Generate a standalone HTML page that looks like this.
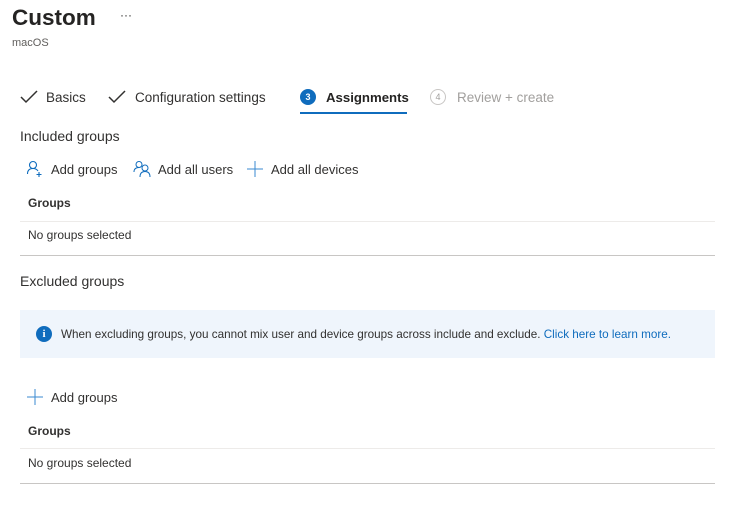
<!DOCTYPE html>
<html><head><meta charset="utf-8"><style>
*{margin:0;padding:0;box-sizing:border-box}
body{width:736px;height:508px;background:#fff;font-family:"Liberation Sans",sans-serif;color:#323130;position:relative;overflow:hidden}
.a{position:absolute;white-space:nowrap}
.t13{font-size:13px}
.line{position:absolute;left:20px;width:695px;height:1px}
svg{position:absolute}
</style></head><body>
<div class="a" style="left:12px;top:5px;font-size:22.5px;font-weight:bold;color:#252423">Custom</div>
<div class="a" style="left:120px;top:8px;font-size:12px">···</div>
<div class="a" style="left:12px;top:37px;font-size:11px;color:#605e5c">macOS</div>

<svg style="left:19px;top:89px" width="20" height="16" viewBox="0 0 20 16"><path d="M2 8l5 5L18 2" fill="none" stroke="#323130" stroke-width="1.5"/></svg>
<div class="a" style="left:46px;top:90px;font-size:13.5px">Basics</div>
<svg style="left:107px;top:89px" width="20" height="16" viewBox="0 0 20 16"><path d="M2 8l5 5L18 2" fill="none" stroke="#323130" stroke-width="1.5"/></svg>
<div class="a" style="left:135px;top:90px;font-size:13.5px">Configuration settings</div>
<div class="a" style="left:300px;top:89px;width:16px;height:16px;border-radius:50%;background:#0f6cbd;color:#fff;font-size:9px;font-weight:bold;text-align:center;line-height:16px">3</div>
<div class="a" style="left:326px;top:90px;font-size:13.2px;font-weight:bold;color:#252423">Assignments</div>
<div class="a" style="left:300px;top:112px;width:107px;height:2px;background:#0f6cbd"></div>
<div class="a" style="left:430px;top:89px;width:16px;height:16px;border-radius:50%;border:1px solid #c8c6c4;color:#a19f9d;font-size:9px;text-align:center;line-height:14px">4</div>
<div class="a" style="left:457px;top:90px;font-size:13.5px;color:#a19f9d">Review + create</div>

<div class="a" style="left:20px;top:128px;font-size:14px">Included groups</div>

<svg style="left:26px;top:160px" width="18" height="18" viewBox="0 0 18 18"><circle cx="7" cy="5" r="3.5" fill="none" stroke="#0f6cbd" stroke-width="1.1"/><path d="M1.5 14c0-4 2.5-5.5 5.5-5.5s4 1 5 2.5" fill="none" stroke="#0f6cbd" stroke-width="1.1"/><path d="M13 12v5M10.5 14.5h5" stroke="#0f6cbd" stroke-width="1.1"/></svg>
<div class="a t13" style="left:51px;top:162px">Add groups</div>
<svg style="left:133px;top:160px" width="20" height="18" viewBox="0 0 20 18"><circle cx="6" cy="4.5" r="3" fill="none" stroke="#0f6cbd" stroke-width="1"/><path d="M1 12c0-3 2-4.5 5-4.5" fill="none" stroke="#0f6cbd" stroke-width="1"/><circle cx="12" cy="8" r="3" fill="none" stroke="#0f6cbd" stroke-width="1"/><path d="M7 17c0-4 2-5.5 5-5.5s5 1.5 5 5.5" fill="none" stroke="#0f6cbd" stroke-width="1"/></svg>
<div class="a t13" style="left:158px;top:162px">Add all users</div>
<svg style="left:246px;top:160px" width="18" height="18" viewBox="0 0 18 18"><path d="M9 1v16M1 9h16" stroke="#3a8ad0" stroke-width="1"/></svg>
<div class="a t13" style="left:271px;top:162px">Add all devices</div>

<div class="a" style="left:28px;top:196px;font-size:12px;font-weight:bold">Groups</div>
<div class="line" style="top:221px;background:#edebe9"></div>
<div class="a" style="left:28px;top:228px;font-size:12px">No groups selected</div>
<div class="line" style="top:255px;background:#c8c6c4"></div>

<div class="a" style="left:20px;top:273px;font-size:14px">Excluded groups</div>

<div class="a" style="left:20px;top:310px;width:695px;height:48px;background:#eff5fc"></div>
<div class="a" style="left:36px;top:326px;width:16px;height:16px;border-radius:50%;background:#0f6cbd;color:#fff;font-size:11px;font-weight:bold;text-align:center;line-height:16px;font-family:'Liberation Serif',serif">i</div>
<div class="a" style="left:61px;top:328px;font-size:11.7px">When excluding groups, you cannot mix user and device groups across include and exclude. <span style="color:#0f6cbd">Click here to learn more.</span></div>

<svg style="left:26px;top:388px" width="18" height="18" viewBox="0 0 18 18"><path d="M9 1v16M1 9h16" stroke="#3a8ad0" stroke-width="1"/></svg>
<div class="a t13" style="left:51px;top:390px">Add groups</div>

<div class="a" style="left:28px;top:424px;font-size:12px;font-weight:bold">Groups</div>
<div class="line" style="top:448px;background:#edebe9"></div>
<div class="a" style="left:28px;top:456px;font-size:12px">No groups selected</div>
<div class="line" style="top:483px;background:#c8c6c4"></div>
</body></html>
